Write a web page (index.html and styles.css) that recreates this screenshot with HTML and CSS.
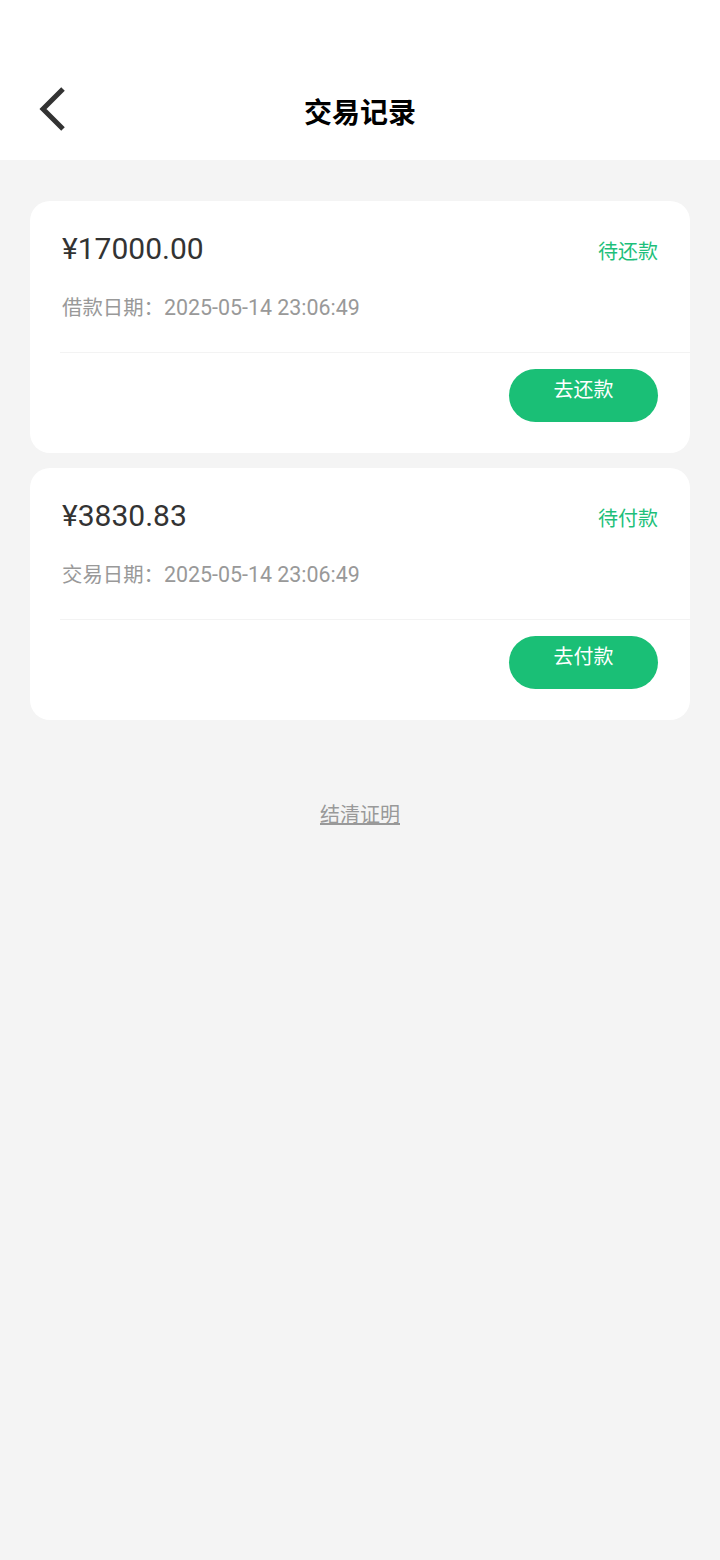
FILE: index.html
```html
<!DOCTYPE html>
<html lang="zh-CN">
	<head>
		<meta charset="UTF-8">
		<title>交易记录</title>
		<link rel="stylesheet" href="styles.css">
	</head>
	<body>
		<div class="header">
			<a class="back" href="#">
				<svg width="32" height="46" viewBox="0 0 32 46">
					<polyline points="27,3 7,23 27,43" fill="none" stroke="#333" stroke-width="5" />
				</svg>
			</a>
			<div class="title">交易记录</div>
		</div>

		<div class="list">
			<div class="card">
				<div class="row">
					<span class="amount">¥17000.00</span>
					<span class="status">待还款</span>
				</div>
				<div class="date"><span class="label">借款日期：</span>2025-05-14 23:06:49</div>
				<div class="line"></div>
				<div class="ops">
					<a class="btn" href="#">去还款</a>
				</div>
			</div>

			<div class="card">
				<div class="row">
					<span class="amount">¥3830.83</span>
					<span class="status">待付款</span>
				</div>
				<div class="date"><span class="label">交易日期：</span>2025-05-14 23:06:49</div>
				<div class="line"></div>
				<div class="ops">
					<a class="btn" href="#">去付款</a>
				</div>
			</div>
		</div>

		<div class="prove">
			<a href="#">结清证明</a>
		</div>
	</body>
</html>
```

FILE: styles.css
```css
body {
	margin: 0;
	background-color: #f4f4f4;
	font-family: Roboto, "Noto Sans CJK SC", sans-serif;
	min-height: 1560px;
}

a {
	text-decoration: none;
}

.header {
	position: relative;
	height: 100px;
	padding-top: 60px;
	background-color: #fff;
	display: flex;
	align-items: center;
	justify-content: center;
}

.header .back {
	position: absolute;
	left: 36px;
	top: 86px;
	display: block;
	width: 32px;
	height: 46px;
}

.header .back svg {
	display: block;
}

.title {
	font-family: "Noto Sans CJK SC", sans-serif;
	font-size: 28px;
	font-weight: bold;
	color: #000;
	line-height: 40px;
	margin-top: 2px;
}

.list {
	padding: 41px 30px 0;
	display: flex;
	flex-direction: column;
	gap: 15px;
}

.card {
	background-color: #fff;
	border-radius: 20px;
	padding: 30px 0 31px 0;
}

.row {
	display: flex;
	justify-content: space-between;
	align-items: center;
	padding: 0 32px;
	height: 36px;
}

.amount {
	font-size: 30px;
	color: #333;
	line-height: 36px;
}

.status {
	font-family: "Noto Sans CJK SC", sans-serif;
	font-size: 20px;
	color: #1dbf7a;
	line-height: 28px;
	margin-top: 4px;
}

.date {
	padding: 0 32px;
	margin-top: 27px;
	font-size: 21.4px;
	line-height: 28px;
	color: #999;
}

.date .label {
	font-size: 20.4px;
}

.line {
	margin: 30px 0 0 30px;
	height: 1px;
	background-color: #f3f3f3;
}

.ops {
	display: flex;
	justify-content: flex-end;
	padding: 16px 32px 0;
}

.btn {
	display: block;
	width: 149px;
	height: 53px;
	line-height: 40px;
	border-radius: 27px;
	background-color: #1abf76;
	color: #fff;
	text-align: center;
	font-family: "Noto Sans CJK SC", sans-serif;
	font-size: 20px;
}

.prove {
	margin-top: 80px;
	text-align: center;
}

.prove a {
	font-family: "Noto Sans CJK SC", sans-serif;
	font-size: 20px;
	line-height: 28px;
	color: #999;
	text-decoration: underline;
}
```
